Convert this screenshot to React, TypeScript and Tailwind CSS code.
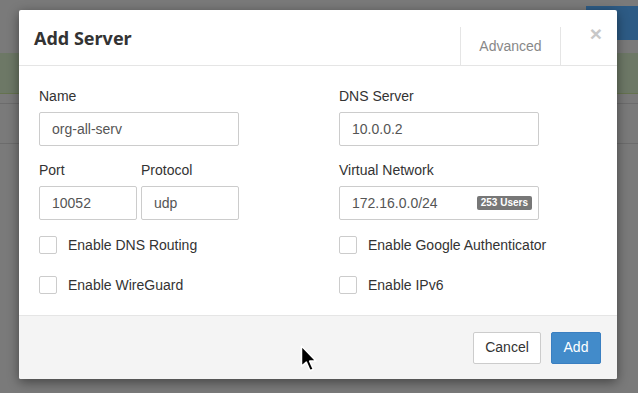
import React from "react";

const font = { fontFamily: '"Liberation Sans", Arial, sans-serif' };

const Field = ({ label, value, className }: { label: string; value: string; className: string }) => (
  <div className={`flex flex-col ${className}`}>
    <label className="text-[14px] leading-[20px] text-[#333] mb-[6px]">{label}</label>
    <div className="h-[34px] border border-[#ccc] rounded-[2px] px-[12px] flex items-center text-[14px] text-[#555]">
      {value}
    </div>
  </div>
);

const Check = ({ label }: { label: string }) => (
  <div className="flex items-center gap-[11px] h-[18px]">
    <span className="w-[18px] h-[18px] border border-[#ccc] rounded-[2px] bg-white" />
    <span className="text-[14px] text-[#333]">{label}</span>
  </div>
);

export default function App() {
  return (
    <div className="relative w-[638px] h-[393px] overflow-hidden bg-[#7a7a7a]" style={font}>
      {/* dimmed page behind */}
      <div className="flex flex-col">
        <div className="h-[6px]" />
        <div className="flex justify-end h-[34px]">
          <div className="w-[52px] bg-[#2d5b85] text-[#8fa6bd] text-[14px] leading-[34px] pl-[9px]">d S</div>
        </div>
        <div className="h-[13px]" />
        <div className="h-[41px] bg-[#6d7866] border-b border-[#65734f]" />
        <div className="h-[10px] border-b border-[#6c6c6c]" />
        <div className="h-[40px] border-b border-[#6c6c6c]" />
      </div>

      {/* modal */}
      <div className="absolute left-[19px] top-[10px] w-[598px] h-[369px] bg-white rounded-[2px] shadow-[0_3px_12px_rgba(0,0,0,0.45)] flex flex-col">
        <div className="h-[56px] border-b border-[#e5e5e5] flex items-stretch">
          <h4
            className="flex-1 pl-[15px] pt-[15px] text-[18px] font-bold text-[#333]"
            style={{ fontFamily: '"Noto Sans", "Open Sans", sans-serif' }}
          >
            Add Server
          </h4>
          <div className="mt-[17px] w-[101px] border-l border-r border-[#e5e5e5] flex items-center justify-center text-[14px] text-[#888] pt-[1px]">
            Advanced
          </div>
          <div className="w-[56px] flex justify-end pr-[15px] pt-[13px] text-[21px] leading-[21px] font-bold text-[#c8c8c8]">
            ×
          </div>
        </div>

        <div className="flex-1 px-[20px] pt-[20px] flex flex-col">
          <div className="grid grid-cols-[300px_1fr]">
            <Field label="Name" value="org-all-serv" className="w-[200px]" />
            <Field label="DNS Server" value="10.0.0.2" className="w-[200px]" />
          </div>
          <div className="grid grid-cols-[300px_1fr] mt-[14px]">
            <div className="flex gap-[4px] w-[200px]">
              <Field label="Port" value="10052" className="w-[98px]" />
              <Field label="Protocol" value="udp" className="w-[98px]" />
            </div>
            <div className="flex flex-col w-[200px]">
              <label className="text-[14px] leading-[20px] text-[#333] mb-[6px]">Virtual Network</label>
              <div className="h-[34px] border border-[#ccc] rounded-[2px] pl-[12px] pr-[6px] flex items-center justify-between text-[14px] text-[#555]">
                <span>172.16.0.0/24</span>
                <span className="bg-[#777] text-white text-[10px] font-bold leading-[14px] px-[4px] rounded-[2px]">
                  253 Users
                </span>
              </div>
            </div>
          </div>
          <div className="grid grid-cols-[300px_1fr] mt-[16px] gap-y-[22px]">
            <Check label="Enable DNS Routing" />
            <Check label="Enable Google Authenticator" />
            <Check label="Enable WireGuard" />
            <Check label="Enable IPv6" />
          </div>
        </div>

        <div className="h-[64px] border-t border-[#e5e5e5] bg-[#f4f4f4] rounded-b-[2px] flex items-center justify-end gap-[10px] pr-[16px]">
          <button className="h-[32px] w-[68px] border border-[#ccc] bg-white rounded-[2px] text-[14px] text-[#333]">
            Cancel
          </button>
          <button className="h-[32px] w-[50px] border border-[#3a7fc1] bg-[#428bca] rounded-[2px] text-[14px] text-white">
            Add
          </button>
        </div>
      </div>

      {/* mouse pointer */}
      <svg className="absolute left-[299px] top-[345px]" width="20" height="30" viewBox="0 0 18 28">
        <path d="M2 1 L2 20 L6.5 16 L10 24 L13 22.6 L9.6 15 L15.5 15 Z" fill="#000" stroke="#fff" strokeWidth="1.4" strokeLinejoin="round" />
      </svg>
    </div>
  );
}
